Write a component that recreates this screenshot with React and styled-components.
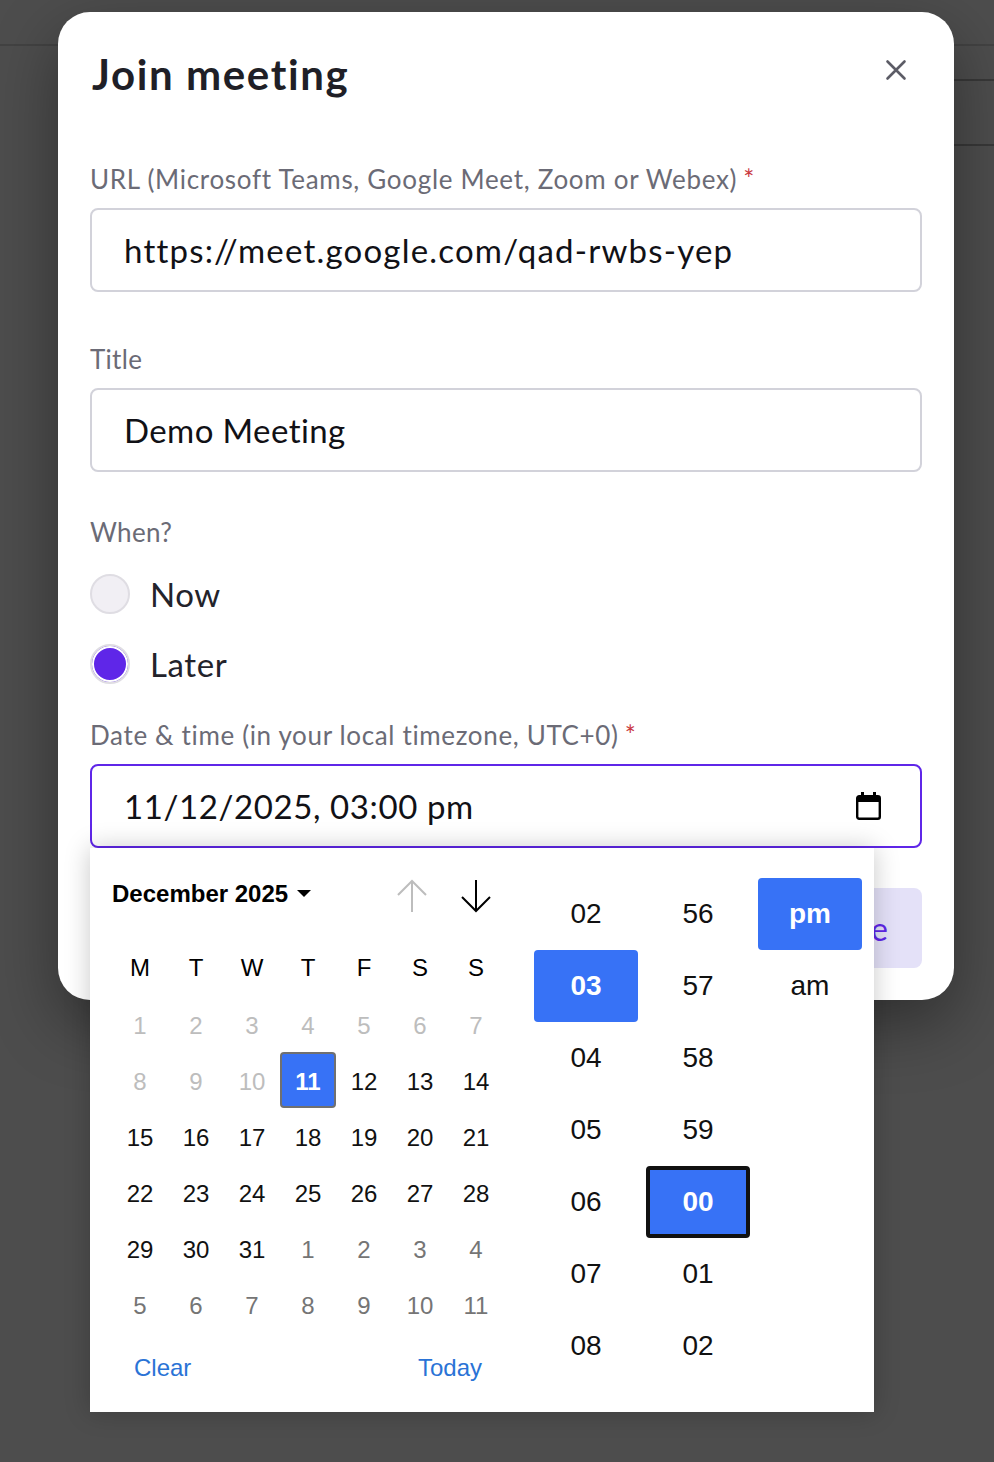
import React from "react";
import styled, { createGlobalStyle } from "styled-components";

const GlobalStyle = createGlobalStyle`
  html, body {
    margin: 0;
    padding: 0;
    background: #4d4d4d;
  }
  * {
    box-sizing: border-box;
  }
`;

const uiFont = `"Lato", "Noto Sans", sans-serif`;
const pickerFont = `"Liberation Sans", Arial, sans-serif`;

const weekDays = ["M", "T", "W", "T", "F", "S", "S"];

const days = [
  ...[1, 2, 3, 4, 5, 6, 7, 8, 9, 10].map((n) => ({ n, kind: "disabled" })),
  { n: 11, kind: "selected" },
  ...Array.from({ length: 20 }, (_, i) => ({ n: i + 12, kind: "normal" })),
  ...[1, 2, 3, 4, 5, 6, 7, 8, 9, 10, 11].map((n) => ({ n, kind: "other" })),
];

const dayColors = {
  disabled: "#bdbdbd",
  normal: "#111111",
  other: "#757575",
  selected: "#ffffff",
};

const hours = ["02", "03", "04", "05", "06", "07", "08"];
const minutes = ["56", "57", "58", "59", "00", "01", "02"];

const Page = styled.div`
  position: relative;
  width: 994px;
  height: 1462px;
  overflow: hidden;
  background: #4d4d4d;
`;

const BackHeader = styled.div`
  height: 46px;
  border-bottom: 2px solid #424242;
`;

const BackRow = styled.div`
  height: ${(p) => p.$h}px;
  margin-left: 954px;
  border-bottom: 2px solid #383838;
`;

const Modal = styled.div`
  position: absolute;
  top: 12px;
  left: 58px;
  width: 896px;
  height: 988px;
  padding: 0 32px;
  background: #ffffff;
  border-radius: 32px;
  box-shadow: 0 24px 64px rgba(0, 0, 0, 0.38);
  font-family: ${uiFont};
  font-variant-ligatures: none;
`;

const ModalHeader = styled.div`
  display: flex;
  justify-content: space-between;
  align-items: flex-start;
  height: 150px;
  padding-top: 36px;
`;

const Title = styled.h1`
  margin: 0 0 0 2px;
  font-size: 42px;
  line-height: 52px;
  font-weight: 700;
  letter-spacing: 1.6px;
  color: #1f1f27;
`;

const CloseButton = styled.button`
  display: flex;
  margin: 10px 14px 0 0;
  padding: 0;
  border: 0;
  background: none;
  color: #5c5c66;
`;

const Label = styled.label`
  display: block;
  font-size: 26px;
  line-height: 34px;
  font-weight: 400;
  letter-spacing: ${(p) => p.$spacing ?? 0.7}px;
  color: #6b6b76;
`;

const Required = styled.span`
  margin-left: 6px;
  color: #c9383f;
  font-size: 26px;
`;

const Field = styled.div`
  display: flex;
  align-items: center;
  justify-content: space-between;
  height: 84px;
  margin-top: 12px;
  padding: 0 32px;
  border: 2px solid ${(p) => (p.$focused ? "#5f26e8" : "#d2d2da")};
  border-radius: 8px;
  font-size: 33px;
  color: #111116;
  letter-spacing: ${(p) => p.$spacing}px;
`;

const FieldGroup = styled.div`
  margin-top: ${(p) => p.$mt || 0}px;
  margin-bottom: ${(p) => p.$mb || 0}px;
`;

const RadioRow = styled.div`
  display: flex;
  align-items: center;
  gap: 20px;
  height: 40px;
  margin-top: ${(p) => p.$mt}px;
  font-size: 33px;
  letter-spacing: 0.6px;
  color: #23232b;
`;

const Radio = styled.span`
  width: 40px;
  height: 40px;
  border-radius: 50%;
  border: 2px solid #dfdde3;
  background: ${(p) => (p.$checked ? "#5f26e8" : "#f1eff4")};
  box-shadow: ${(p) => (p.$checked ? "inset 0 0 0 2px #ffffff" : "none")};
`;

const Footer = styled.div`
  display: flex;
  justify-content: flex-end;
  margin-top: 40px;
`;

const SubmitButton = styled.button`
  height: 80px;
  padding: 0 34px;
  border: 0;
  border-radius: 8px;
  background: #e4e1f8;
  color: #5f26e8;
  font-family: ${uiFont};
  font-size: 32px;
`;

const Popover = styled.div`
  position: absolute;
  top: 848px;
  left: 90px;
  display: flex;
  width: 784px;
  height: 564px;
  background: #ffffff;
  box-shadow: 0 0 24px rgba(0, 0, 0, 0.22);
  font-family: ${pickerFont};
  color: #111111;
`;

const Calendar = styled.div`
  width: 436px;
  padding: 0 22px;
`;

const CalendarHead = styled.div`
  display: flex;
  align-items: center;
  height: 92px;
  margin-right: -4px;
`;

const MonthLabel = styled.div`
  display: flex;
  align-items: center;
  gap: 9px;
  flex: 1;
  font-size: 24px;
  font-weight: 700;
  color: #000000;
`;

const Caret = styled.span`
  width: 0;
  height: 0;
  margin-top: -2px;
  border-left: 7px solid transparent;
  border-right: 7px solid transparent;
  border-top: 7px solid #000000;
`;

const ArrowSlot = styled.span`
  display: flex;
  justify-content: center;
  width: 64px;
  margin-top: 4px;
  color: ${(p) => (p.$muted ? "#bdbdbd" : "#000000")};
`;

const Grid = styled.div`
  display: grid;
  grid-template-columns: repeat(7, 56px);
  grid-auto-rows: 56px;
`;

const WeekDay = styled.div`
  display: flex;
  align-items: center;
  justify-content: center;
  font-size: 24px;
  color: #000000;
`;

const Day = styled.div`
  display: flex;
  align-items: center;
  justify-content: center;
  padding-top: 3px;
  font-size: 24px;
  color: ${(p) => dayColors[p.$kind]};
  font-weight: ${(p) => (p.$kind === "selected" ? 700 : 400)};
  background: ${(p) => (p.$kind === "selected" ? "#3772f6" : "transparent")};
  border: ${(p) => (p.$kind === "selected" ? "2px solid #707070" : "0")};
  border-radius: 4px;
`;

const CalendarFoot = styled.div`
  display: flex;
  justify-content: space-between;
  margin-top: 19px;
  padding: 0 22px;
  font-size: 24px;
  line-height: 34px;
  color: #2a73d6;
`;

const TimeColumns = styled.div`
  display: flex;
  gap: 8px;
  padding: 30px 0 0 8px;
`;

const TimeColumn = styled.div`
  display: flex;
  flex-direction: column;
  width: 104px;
`;

const TimeItem = styled.div`
  display: flex;
  align-items: center;
  justify-content: center;
  height: 72px;
  border-radius: 4px;
  font-size: 28px;
  font-weight: ${(p) => (p.$active ? 700 : 400)};
  color: ${(p) => (p.$active ? "#ffffff" : "#111111")};
  background: ${(p) => (p.$active ? "#3772f6" : "transparent")};
  border: ${(p) => (p.$focus ? "4px solid #111111" : "0")};
`;

const CalendarGlyph = styled.svg`
  margin-right: 7px;
`;

const CloseIcon = () => (
  <svg width="24" height="24" viewBox="0 0 24 24" fill="none" stroke="currentColor" strokeWidth="2.6" strokeLinecap="round">
    <path d="M3.5 3.5l17 17M20.5 3.5l-17 17" />
  </svg>
);

const CalendarIcon = () => (
  <CalendarGlyph width="25" height="28" viewBox="0 0 25 28" fill="none">
    <rect x="1.2" y="4.2" width="22.6" height="22.6" rx="2" stroke="#000" strokeWidth="2.4" />
    <path d="M2 4h21v6H2zM5 0h3v4H5zM17 0h3v4h-3z" fill="#000" />
  </CalendarGlyph>
);

const ArrowUp = () => (
  <svg width="32" height="34" viewBox="0 0 32 34" fill="none" stroke="currentColor" strokeWidth="2">
    <path d="M16 33V2M2 16L16 2l14 14" />
  </svg>
);

const ArrowDown = () => (
  <svg width="32" height="34" viewBox="0 0 32 34" fill="none" stroke="currentColor" strokeWidth="2">
    <path d="M16 1v31M2 18l14 14 14-14" />
  </svg>
);

const App = () => {
  return (
    <>
      <GlobalStyle />
      <Page>
        <BackHeader />
        <BackRow $h={35} />
        <BackRow $h={65} />

        <Modal>
          <ModalHeader>
            <Title>Join meeting</Title>
            <CloseButton>
              <CloseIcon />
            </CloseButton>
          </ModalHeader>

          <FieldGroup $mb={50}>
            <Label>
              URL (Microsoft Teams, Google Meet, Zoom or Webex)
              <Required>*</Required>
            </Label>
            <Field $spacing={1.2}>https://meet.google.com/qad-rwbs-yep</Field>
          </FieldGroup>

          <FieldGroup $mb={43}>
            <Label $spacing={0.3}>Title</Label>
            <Field $spacing={0.4}>Demo Meeting</Field>
          </FieldGroup>

          <Label $spacing={0.3}>When?</Label>
          <RadioRow $mt={25}>
            <Radio />
            Now
          </RadioRow>
          <RadioRow $mt={30}>
            <Radio $checked />
            Later
          </RadioRow>

          <FieldGroup $mt={34}>
            <Label $spacing={0.65}>
              Date &amp; time (in your local timezone, UTC+0)
              <Required>*</Required>
            </Label>
            <Field $focused $spacing={0.6}>
              11/12/2025, 03:00 pm
              <CalendarIcon />
            </Field>
          </FieldGroup>

          <Footer>
            <SubmitButton>Schedule</SubmitButton>
          </Footer>
        </Modal>

        <Popover>
          <Calendar>
            <CalendarHead>
              <MonthLabel>
                December 2025
                <Caret />
              </MonthLabel>
              <ArrowSlot $muted>
                <ArrowUp />
              </ArrowSlot>
              <ArrowSlot>
                <ArrowDown />
              </ArrowSlot>
            </CalendarHead>
            <Grid>
              {weekDays.map((d, i) => (
                <WeekDay key={i}>{d}</WeekDay>
              ))}
              {days.map((d, i) => (
                <Day key={i} $kind={d.kind}>
                  {d.n}
                </Day>
              ))}
            </Grid>
            <CalendarFoot>
              <span>Clear</span>
              <span>Today</span>
            </CalendarFoot>
          </Calendar>
          <TimeColumns>
            <TimeColumn>
              {hours.map((h) => (
                <TimeItem key={h} $active={h === "03"}>
                  {h}
                </TimeItem>
              ))}
            </TimeColumn>
            <TimeColumn>
              {minutes.map((m) => (
                <TimeItem key={m} $active={m === "00"} $focus={m === "00"}>
                  {m}
                </TimeItem>
              ))}
            </TimeColumn>
            <TimeColumn>
              <TimeItem $active>pm</TimeItem>
              <TimeItem>am</TimeItem>
            </TimeColumn>
          </TimeColumns>
        </Popover>
      </Page>
    </>
  );
};

export default App;
